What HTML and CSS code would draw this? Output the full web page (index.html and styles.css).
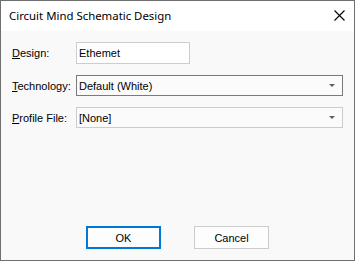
FILE: index.html
```html
<!DOCTYPE html>
<html lang="en">
<head>
  <meta charset="UTF-8">
  <title>Circuit Mind Schematic Design</title>
  <link rel="stylesheet" href="styles.css">
</head>
<body>
  <div class="window">
    <div class="titlebar">
      <span class="title">Circuit Mind Schematic Design</span>
      <svg class="close" width="11" height="11" viewBox="0 0 11 11">
        <path d="M0.5 0.5 L10.5 10.5 M10.5 0.5 L0.5 10.5" stroke="#000" stroke-width="1.1" fill="none"/>
      </svg>
    </div>

    <div class="content">
      <div class="row">
        <label class="lbl"><u>D</u>esign:</label>
        <div class="textbox">Ethemet</div>
      </div>
      <div class="row">
        <label class="lbl"><u>T</u>echnology:</label>
        <div class="combo focus">
          <span>Default (White)</span>
          <span class="arrow"></span>
        </div>
      </div>
      <div class="row">
        <label class="lbl"><u>P</u>rofile File:</label>
        <div class="combo">
          <span>[None]</span>
          <span class="arrow"></span>
        </div>
      </div>
    </div>

    <div class="buttons">
      <button class="btn default">OK</button>
      <button class="btn">Cancel</button>
    </div>
  </div>
</body>
</html>
```

FILE: styles.css
```css
body {
  margin: 0;
  font-family: "Liberation Sans", Arial, sans-serif;
  font-size: 11px;
  color: #000;
}

.window {
  width: 355px;
  height: 261px;
  box-sizing: border-box;
  border: 1px solid #6f6f6f;
  background: #f9f9f9;
  display: flex;
  flex-direction: column;
}

.titlebar {
  height: 30px;
  background: #fff;
  display: flex;
  align-items: center;
  justify-content: space-between;
  padding: 0 9px 0 8px;
}

.title {
  font-family: "Noto Sans", sans-serif;
  font-size: 11.4px;
  color: #000;
  margin-top: -1px;
}

.close {
  display: block;
  margin-top: -1px;
}

.content {
  padding: 11px 11px 0 11px;
  display: flex;
  flex-direction: column;
  gap: 11px;
}

.row {
  display: flex;
  align-items: center;
}

.lbl {
  width: 64px;
  flex: none;
}

.textbox {
  width: 114px;
  height: 22px;
  box-sizing: border-box;
  border: 1px solid #cdcdcd;
  background: #fff;
  padding: 0 2px;
  display: flex;
  align-items: center;
}

.combo {
  width: 267px;
  height: 21px;
  box-sizing: border-box;
  border: 1px solid #cccccc;
  background: #fbfbfb;
  padding: 0 7px 0 2px;
  display: flex;
  align-items: center;
  justify-content: space-between;
}

.combo.focus {
  border-color: #7a7a7a;
}

.arrow {
  width: 0;
  height: 0;
  border-left: 3px solid transparent;
  border-right: 3px solid transparent;
  border-top: 3px solid #606060;
}

.buttons {
  margin-top: auto;
  padding-bottom: 11px;
  display: flex;
  justify-content: center;
  gap: 33px;
}

.btn {
  width: 75px;
  height: 23px;
  box-sizing: border-box;
  border: 1px solid #cccccc;
  background: #fdfdfd;
  font-family: "Liberation Sans", Arial, sans-serif;
  font-size: 11px;
  color: #000;
  padding: 0;
}

.btn.default {
  border: 2px solid #0078d7;
}
```
